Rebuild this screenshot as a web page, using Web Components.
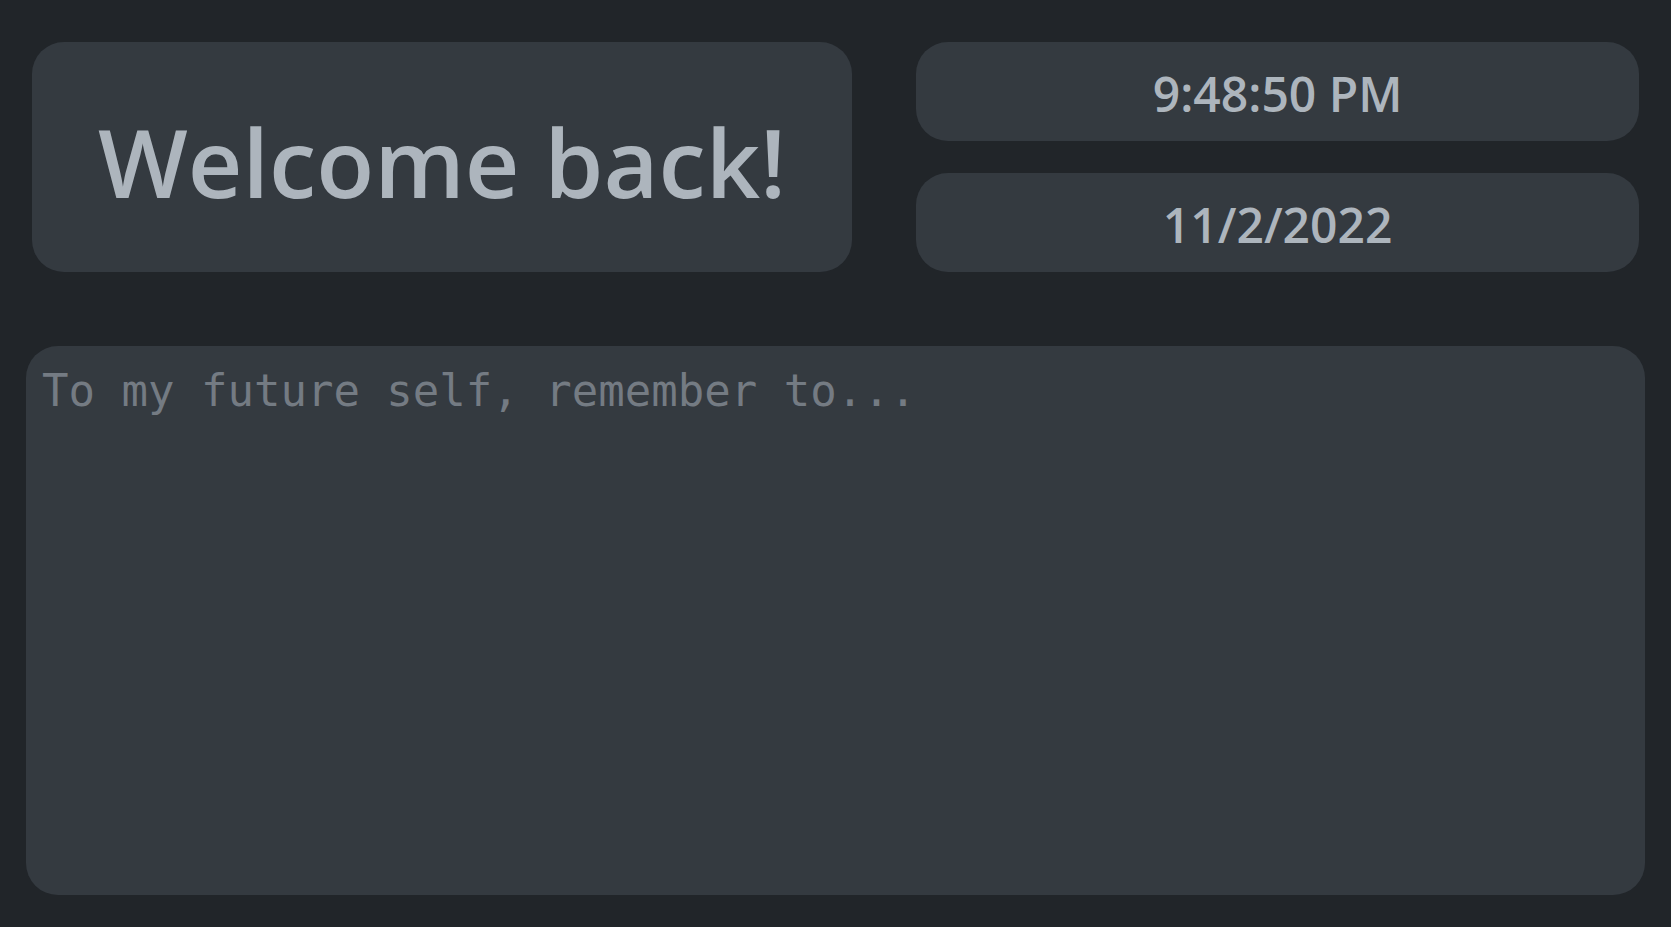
<!DOCTYPE html>
<html lang="en">
<head>
<meta charset="utf-8">
<title>Welcome back!</title>
<style>
html, body { height: 100%; }
body { margin: 0; background: #212529; color: #adb5bd; font-family: "Open Sans", "Noto Sans", sans-serif; }
</style>
</head>
<body>
<start-page>
  <info-card slot="greeting" size="large"><h1>Welcome back!</h1></info-card>
  <info-card slot="status"><time datetime="21:48:50">9:48:50 PM</time></info-card>
  <info-card slot="status"><time datetime="2022-11-02">11/2/2022</time></info-card>
  <note-pad slot="notes" placeholder="To my future self, remember to..."></note-pad>
</start-page>
<script>
class StartPage extends HTMLElement {
  constructor() {
    super();
    this.attachShadow({ mode: 'open' }).innerHTML = `
      <style>
        :host { display: flex; flex-direction: column; box-sizing: border-box; min-height: 100vh; padding: 42px 26px 32px; gap: 74px; }
        header { display: flex; gap: 64px; padding: 0 6px; }
        .greeting { display: grid; }
        .status { flex: 1; display: grid; gap: 32px; }
        main { flex: 1; display: grid; }
      </style>
      <header>
        <div class="greeting"><slot name="greeting"></slot></div>
        <div class="status"><slot name="status"></slot></div>
      </header>
      <main><slot name="notes"></slot></main>`;
  }
}
class InfoCard extends HTMLElement {
  constructor() {
    super();
    this.attachShadow({ mode: 'open' }).innerHTML = `
      <style>
        :host { display: grid; place-items: center; box-sizing: border-box; padding: 18px 16px 14px; border-radius: 32px; background: #343a40; font-size: 48px; line-height: 67px; font-weight: 600; white-space: nowrap; }
        :host([size="large"]) { padding: 36px 66px 28px; font-size: 95px; line-height: 134px; }
        ::slotted(*) { margin: 0; font: inherit; }
      </style>
      <slot></slot>`;
  }
}
class NotePad extends HTMLElement {
  constructor() {
    super();
    this.attachShadow({ mode: 'open' }).innerHTML = `
      <style>
        :host { display: grid; }
        textarea { display: block; box-sizing: border-box; width: 100%; height: 100%; margin: 0; padding: 16px; border: 0; border-radius: 32px; outline: 0; resize: none; background: #343a40; color: #adb5bd; font: 44px/58px "DejaVu Sans Mono", monospace; }
        textarea::placeholder { color: #747b83; opacity: 1; }
      </style>
      <textarea aria-label="Notes"></textarea>`;
    this.shadowRoot.querySelector('textarea').placeholder = this.getAttribute('placeholder') || '';
  }
}
customElements.define('start-page', StartPage);
customElements.define('info-card', InfoCard);
customElements.define('note-pad', NotePad);
</script>
</body>
</html>
